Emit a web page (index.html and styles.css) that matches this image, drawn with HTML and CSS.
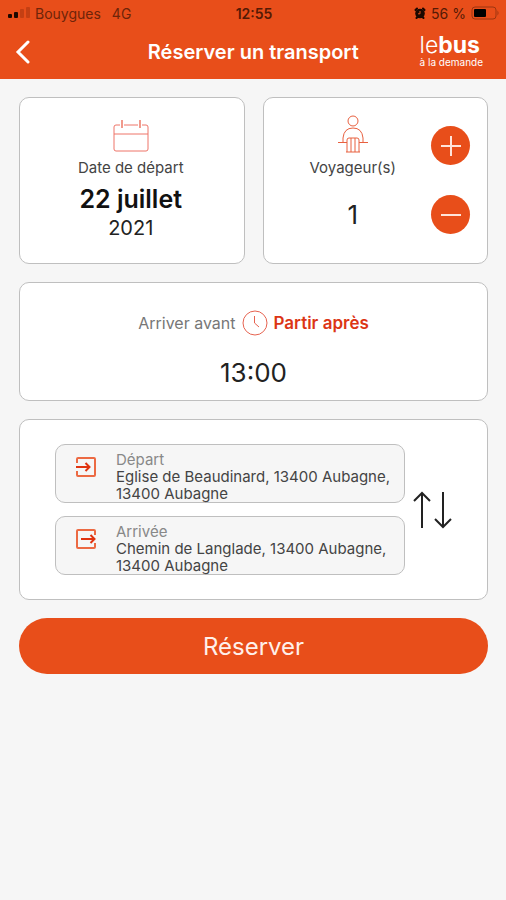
FILE: index.html
```html
<!DOCTYPE html>
<html lang="fr">
<head>
<meta charset="utf-8">
<meta name="viewport" content="width=device-width, initial-scale=1">
<title>Réserver un transport</title>
<link rel="stylesheet" href="styles.css">
</head>
<body>
<header class="header">
  <div class="status">
    <div class="status-left">
      <svg class="signal" viewBox="0 0 22 12" aria-hidden="true">
        <rect x="0" y="7" width="4" height="4" rx="1"/>
        <rect x="6" y="5" width="4" height="6" rx="1"/>
        <rect class="dim" x="12" y="2" width="4" height="9" rx="1"/>
        <rect class="dim" x="18" y="0" width="4" height="11" rx="1"/>
      </svg>
      <span>Bouygues</span>
      <span class="network">4G</span>
    </div>
    <span class="clock">12:55</span>
    <div class="status-right">
      <svg class="alarm" viewBox="0 0 12 12" aria-hidden="true">
        <path d="M1.500 3 3 1.500M10.500 3 9 1.500M2.500 11l1-1M9.500 11l-1-1" stroke="#1c0800" stroke-width="2" stroke-linecap="round"/>
        <circle cx="6" cy="6.500" r="4.800" fill="#1c0800"/>
        <path d="M6 4v2.800H4" fill="none" stroke="#e84e1a" stroke-width="1"/>
      </svg>
      <span class="charge">56 %</span>
      <svg class="battery" viewBox="0 0 29 14" aria-hidden="true">
        <rect x="1" y="1" width="24" height="12" rx="3" fill="none" stroke="#9c3510"/>
        <rect x="3" y="3" width="12" height="8" rx="1" fill="#000"/>
        <path d="M26.500 4.500q2 2.500 0 5z" fill="#9c3510"/>
      </svg>
    </div>
  </div>
  <div class="nav">
    <button class="back" type="button" aria-label="Retour">
      <svg viewBox="0 0 16 24" aria-hidden="true"><path d="M13 2 3 12l10 10"/></svg>
    </button>
    <h1 class="title">Réserver un transport</h1>
    <div class="logo">
      <span class="logo-name">le<b>bus</b></span>
      <span class="logo-sub">à la demande</span>
    </div>
  </div>
</header>
<main class="content">
  <div class="row">
    <section class="card date">
      <svg class="calendar" viewBox="0 0 36 34" aria-hidden="true">
        <path d="M7 6H3q-2 0-2 2v22q0 2 2 2h30q2 0 2-2V8q0-2-2-2h-4M11 6h14M1 15h34"/>
        <path class="rings" d="M9 1v8M27 1v8"/>
      </svg>
      <span class="label">Date de départ</span>
      <strong class="day">22 juillet</strong>
      <span class="year">2021</span>
    </section>
    <section class="card travelers">
      <div class="count">
        <svg class="person" viewBox="0 0 30 38" aria-hidden="true">
          <circle cx="15" cy="6" r="5"/>
          <path d="M0 27.500h9M21 27.500h9M5 27v-4Q6 13 15 13t10 10v4M9 37V25q0-2 2-2h8q2 0 2 2v12M13 23v14M17 23v14M8 37h14"/>
        </svg>
        <span class="label">Voyageur(s)</span>
        <output class="number">1</output>
      </div>
      <div class="stepper">
        <button class="round" type="button" aria-label="Ajouter un voyageur">
          <svg viewBox="0 0 22 22" aria-hidden="true"><path d="M1 11h20M11 1v20"/></svg>
        </button>
        <button class="round" type="button" aria-label="Retirer un voyageur">
          <svg viewBox="0 0 22 22" aria-hidden="true"><path d="M1 11h20"/></svg>
        </button>
      </div>
    </section>
  </div>
  <section class="card time">
    <div class="modes">
      <button class="mode" type="button">Arriver avant</button>
      <svg class="clock-icon" viewBox="0 0 26 26" aria-hidden="true">
        <circle cx="13" cy="13" r="12"/><path d="M12.500 6v7l4.500 4"/>
      </svg>
      <button class="mode active" type="button">Partir après</button>
    </div>
    <span class="hour">13:00</span>
  </section>
  <section class="card trip">
    <div class="stops">
      <button class="stop" type="button">
        <svg class="stop-icon" viewBox="0 0 20 20" aria-hidden="true">
          <path d="M1 6V2q0-1 1-1h16q1 0 1 1v16q0 1-1 1H2q-1 0-1-1v-4"/>
          <path class="arrow" d="M0 10h13M9.500 6l4 4-4 4"/>
        </svg>
        <span class="stop-text"><span class="stop-label">Départ</span><span>Eglise de Beaudinard, 13400 Aubagne, 13400 Aubagne</span></span>
      </button>
      <button class="stop" type="button">
        <svg class="stop-icon" viewBox="0 0 20 20" aria-hidden="true">
          <path d="M19 6V2q0-1-1-1H2Q1 1 1 2v16q0 1 1 1h16q1 0 1-1v-4"/>
          <path class="arrow" d="M5 10h13M14.500 6l4 4-4 4"/>
        </svg>
        <span class="stop-text"><span class="stop-label">Arrivée</span><span>Chemin de Langlade, 13400 Aubagne, 13400 Aubagne</span></span>
      </button>
    </div>
    <button class="swap" type="button" aria-label="Inverser départ et arrivée">
      <svg viewBox="0 0 40 38" aria-hidden="true"><path d="M9 37V2M1 10l8-8 8 8M30 1v35M22 28l8 8 8-8"/></svg>
    </button>
  </section>
  <button class="submit" type="button">Réserver</button>
</main>
</body>
</html>
```
FILE: styles.css
```css
* { box-sizing: border-box; }

body {
  margin: 0;
  min-height: 100vh;
  background: #f6f6f6;
  color: #222;
  font-family: Inter, "Liberation Sans", sans-serif;
}

button {
  margin: 0;
  padding: 0;
  border: 0;
  background: none;
  color: inherit;
  font: inherit;
}

svg { display: block; flex: none; }

.header { background: #e84e1a; color: #fff; padding-bottom: 2px; }

.status {
  display: grid;
  grid-template-columns: 1fr auto 1fr;
  align-items: center;
  height: 26px;
  padding: 0 6px 0 8px;
  color: #6e2409;
  font-size: 14px;
}
.status-left, .status-right { display: flex; align-items: center; gap: 5px; }
.status-right { justify-content: flex-end; color: #541a05; }
.signal { width: 22px; height: 12px; fill: #1c0800; }
.signal .dim { fill: #c43f13; }
.network { margin-left: 6px; }
.clock { color: #541a05; font-weight: 600; }
.alarm { width: 12px; height: 12px; }
.battery { width: 29px; height: 14px; }

.nav {
  display: grid;
  grid-template-columns: auto 1fr auto;
  align-items: center;
  height: 51px;
  padding: 0 23px 0 15px;
}
.back svg { width: 16px; height: 24px; fill: none; stroke: #fff; stroke-width: 3; stroke-linecap: round; }
.title { margin: 0 0 0 56px; font-size: 20px; font-weight: 600; text-align: center; }
.logo { display: flex; flex-direction: column; }
.logo-name { font-size: 23px; line-height: 21px; font-weight: 300; }
.logo-name b { font-weight: 700; }
.logo-sub { font-size: 10px; line-height: 12px; }

.content { display: flex; flex-direction: column; gap: 18px; padding: 18px 18px 18px 19px; }
.row { display: grid; grid-template-columns: 1fr 1fr; gap: 18px; }
.card { background: #fff; border: 1px solid #bfbfbf; border-radius: 10px; }

.date { display: flex; flex-direction: column; align-items: center; padding: 21px 18px 22px 16px; }
.calendar { width: 36px; height: 34px; fill: none; stroke: #ee7468; stroke-width: 1; }
.rings { stroke: #f19a8c; stroke-width: 2; }
.label { margin-top: 6px; font-size: 15px; line-height: 18px; color: #444; }
.day { margin-top: 6px; font-size: 25px; line-height: 32px; font-weight: 600; color: #111; }
.year { font-size: 20px; line-height: 26px; }

.travelers { display: flex; justify-content: space-between; padding: 17px 17px 0 46px; }
.count { display: flex; flex-direction: column; align-items: center; }
.person { width: 30px; height: 38px; fill: none; stroke: #e8603f; stroke-width: 1; }
.number { margin-top: 22px; font-size: 26px; line-height: 32px; }
.stepper { display: flex; flex-direction: column; gap: 30px; padding-top: 11px; }
.round {
  display: grid;
  place-items: center;
  width: 39px;
  height: 39px;
  border-radius: 50%;
  background: #e84e1a;
}
.round svg { width: 22px; height: 22px; stroke: #ffe4da; stroke-width: 2; }

.time { display: flex; flex-direction: column; align-items: center; gap: 21px; padding: 27px 16px 11px; }
.modes { display: flex; align-items: center; gap: 6px; font-size: 16px; line-height: 26px; }
.mode { color: #777; }
.mode.active { color: #dc3515; font-size: 17px; font-weight: 600; }
.clock-icon { width: 26px; height: 26px; fill: none; stroke: #e66350; stroke-width: 1; }
.hour { font-size: 26px; line-height: 32px; }

.trip { display: flex; align-items: center; gap: 8px; padding: 24px 34px 24px 35px; }
.stops { flex: 1; display: flex; flex-direction: column; gap: 13px; }
.stop {
  display: flex;
  align-items: flex-start;
  gap: 20px;
  padding: 6px 8px 0 20px;
  border: 1px solid #bfbfbf;
  border-radius: 10px;
  background: #f6f6f6;
  text-align: left;
  font-size: 15px;
  line-height: 17px;
  color: #444;
}
.stop-icon { width: 20px; height: 20px; margin-top: 6px; fill: none; stroke: #ec6a43; stroke-width: 2; }
.stop-icon .arrow { stroke: #e03410; }
.stop-text { display: flex; flex-direction: column; }
.stop-label { color: #888; }
.swap svg { width: 40px; height: 38px; fill: none; stroke: #222; stroke-width: 2; }

.submit {
  height: 56px;
  border-radius: 28px;
  background: #e84e1a;
  color: #fff0ea;
  font-size: 24px;
}
```
